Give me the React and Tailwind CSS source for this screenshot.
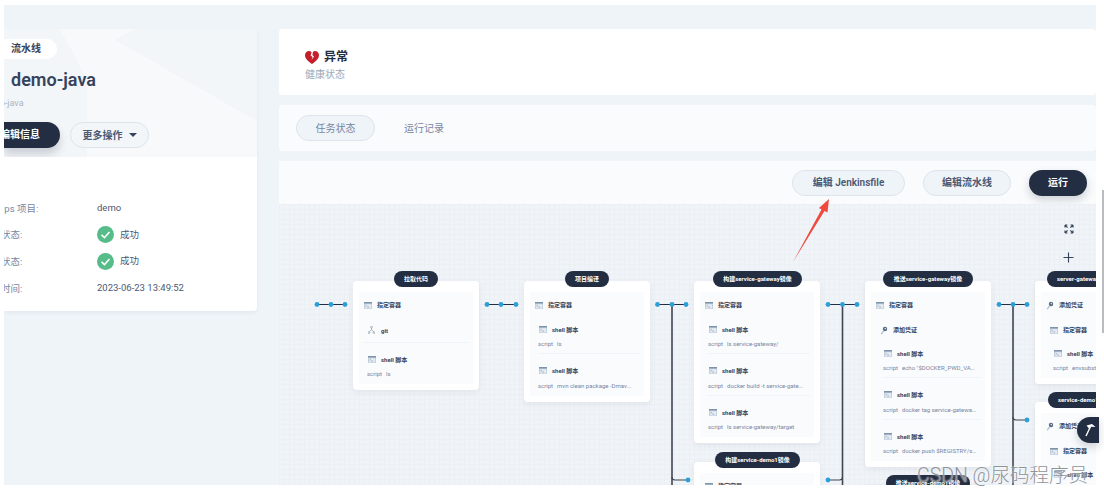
import React from "react";

function TermIcon() {
  return (
    <svg width="8" height="7" viewBox="0 0 8 7" className="shrink-0">
      <rect x="0" y="0" width="8" height="7" fill="#c3d0de" />
      <rect x="0" y="0" width="8" height="1.5" fill="#7f93ab" />
      <rect x="1" y="2.3" width="6" height="4" fill="#e6edf4" />
      <path d="M1.6 3l1 .8-1 .8M3.2 5h2" stroke="#5f738c" strokeWidth=".5" fill="none" />
    </svg>
  );
}

function KeyIcon() {
  return (
    <svg width="8" height="9" viewBox="0 0 8 9" className="shrink-0">
      <circle cx="5" cy="3" r="2.2" fill="#55677f" />
      <circle cx="5.3" cy="2.6" r=".8" fill="#dbe4ee" />
      <path d="M3.8 4.6L1.2 8.2" stroke="#a9bed2" strokeWidth="1.2" />
    </svg>
  );
}

function GitIcon() {
  return (
    <svg width="7" height="8" viewBox="0 0 7 8" className="shrink-0">
      <path d="M3.5 1.5V3.6L1 6.2M3.5 3.6L6 6.2" stroke="#7a8aa0" strokeWidth=".6" fill="none" />
      <circle cx="3.5" cy="1.2" r=".9" fill="#fff" stroke="#66778f" strokeWidth=".5" />
      <circle cx="1" cy="6.6" r=".9" fill="#fff" stroke="#66778f" strokeWidth=".5" />
      <circle cx="6" cy="6.6" r=".9" fill="#fff" stroke="#66778f" strokeWidth=".5" />
    </svg>
  );
}

function Row({ icon, title, pad, gap, h }) {
  return (
    <div className={`flex items-center ${pad} ${gap} ${h}`}>
      {icon}
      <span className="text-[6px] leading-3 font-bold text-[#36435c] whitespace-nowrap">{title}</span>
    </div>
  );
}

function Shell({ script, last }) {
  return (
    <div className={`h-9 pt-[5px] ${last ? "" : "border-b border-[#eff4f9] mb-[5.6px]"}`}>
      <div className="flex items-center gap-[5px] h-3 pl-px">
        <TermIcon />
        <span className="text-[6px] font-bold text-[#36435c] whitespace-nowrap">shell 脚本</span>
      </div>
      <div className="flex h-3 mt-[3px] text-[6px] leading-3 text-[#79869f] whitespace-nowrap">
        <span className="w-[19px] shrink-0">script</span>
        <span className="truncate w-[76px]">{script}</span>
      </div>
    </div>
  );
}

function Node({ pos, title, pill, children }) {
  return (
    <div className={`absolute ${pos} w-[126px] bg-white rounded-[4px] shadow-[0_2px_6px_rgba(36,46,66,0.07)] p-[6px] pt-[11px]`}>
      <div className={`absolute -top-[10px] h-4 rounded-full bg-[#242e42] text-white text-[6px] font-bold leading-4 whitespace-nowrap ${pill}`}>
        {title}
      </div>
      <div className="bg-[#f9fbfd]">{children}</div>
    </div>
  );
}

const Container = () => <Row icon={<TermIcon />} title="指定容器" pad="pl-[5px]" gap="gap-[5px]" h="h-[26px]" />;
const Cred = ({ h = "h-6", pad = "pl-[9px]" }) => <Row icon={<KeyIcon />} title="添加凭证" pad={pad} gap="gap-[5px]" h={h} />;

function Connectors() {
  const dots = [
    [38, 100.5], [52, 100.5], [66, 100.5],
    [208, 100.5], [222, 100.5], [237, 100.5],
    [378.5, 100.5], [393, 100.5], [407, 100.5],
    [549, 100.5], [563.5, 100.5], [578, 100.5],
    [720, 100.5], [734, 100.5], [748, 100.5],
    [409, 276], [549, 276], [748, 216],
  ];
  return (
    <svg className="absolute left-0 top-0 w-[817px] h-[281px]" viewBox="0 0 817 281">
      <path d="M38 100.5H66M208 100.5H237M378.5 100.5H407M549 100.5H578M720 100.5H748" stroke="#242e42" strokeWidth="1" fill="none" />
      <path d="M393 100.5V281M563.5 100.5V281M734 100.5V281" stroke="#3f4753" strokeWidth="1.6" fill="none" />
      <path d="M393 273q0 3 3 3H409M563.5 273q0 3 -3 3H549M734 213q0 3 3 3H748" stroke="#3f4753" strokeWidth="1.1" fill="none" />
      {dots.map(([x, y], i) => (
        <circle key={i} cx={x} cy={y} r="2.4" fill="#2d9fd8" />
      ))}
    </svg>
  );
}

export default function App() {
  return (
    <div className="w-[1104px] h-[494px] bg-white overflow-hidden relative font-['Roboto','Noto_Sans_CJK_SC',sans-serif]">
      <div className="ml-1 mt-[5px] w-[1092px] h-[480px] bg-[#eff4f9] overflow-hidden flex gap-[22px] pt-6">
        {/* left column */}
        <div className="w-[253px] h-[282px] shrink-0 bg-white rounded-r-[4px] shadow-[0_2px_4px_rgba(36,46,66,0.06)] overflow-hidden">
          <div className="relative h-[128px] bg-[#f3f6f9] overflow-hidden">
            <svg className="absolute left-0 top-0 w-[253px] h-[128px]" viewBox="0 0 253 128">
              <path d="M56 0H131L111 11V128H83V50Z" fill="#f7f9fb" />
              <path d="M111 11L253 92V128H147V72L222 114L147 128H111Z" fill="#f7f9fb" />
            </svg>
            <div className="relative pt-[10px]">
              <div className="w-[53px] h-5 bg-white rounded-r-full pl-[7px] text-[10px] leading-5 font-semibold text-[#36435c]">流水线</div>
              <div className="mt-[10px] pl-[7px] text-[18px] leading-[22px] font-semibold text-[#36435c]">demo-java</div>
              <div className="-ml-[22px] mt-[6px] text-[9px] leading-3 text-[#abb4c3]">demo-java</div>
              <div className="flex items-center mt-[13px] gap-[10px]">
                <div className="w-[56px] h-[26px] shrink-0 bg-[#242e42] rounded-r-full overflow-hidden flex justify-end pr-5 text-[10px] leading-[26px] font-semibold text-white whitespace-nowrap shadow-[0_6px_10px_rgba(36,46,66,0.2)]">编辑信息</div>
                <div className="w-[79px] h-[26px] rounded-full bg-[#f3f6f9] border border-[#dde4ec] flex items-center justify-center gap-[6px] text-[10px] font-semibold text-[#4a5974]">
                  更多操作
                  <span className="w-0 h-0 border-x-[4px] border-x-transparent border-t-[4px] border-t-[#36435c]" />
                </div>
              </div>
            </div>
          </div>
          <div className="-ml-[22px] pt-[38px] text-[9.5px] text-[#79869f]">
            {[
              ["DevOps 项目:", "demo"],
              ["任务状态:", "ok"],
              ["同步状态:", "ok"],
              ["更新时间:", "2023-06-23 13:49:52"],
            ].map(([k, v]) => (
              <div key={k} className="flex items-center h-[26.6px]">
                <span className="w-[115px] shrink-0 leading-3 pt-px">{k}</span>
                {v === "ok" ? (
                  <span className="flex items-center gap-[6px] text-[#4a5974]">
                    <svg width="17" height="17" viewBox="0 0 17 17">
                      <circle cx="8.5" cy="8.5" r="8.5" fill="#55bc8a" />
                      <path d="M4.5 8.8l3 2.8 5-5.6" stroke="#fff" strokeWidth="1.6" fill="none" />
                    </svg>
                    成功
                  </span>
                ) : (
                  <span className="text-[#4a5974]">{v}</span>
                )}
              </div>
            ))}
          </div>
        </div>

        {/* right column */}
        <div className="w-[817px] shrink-0 flex flex-col gap-[10px]">
          <div className="h-[66px] bg-white rounded-[4px] pl-[26px] pt-[18px]">
            <div className="flex items-center gap-[5px] h-5">
              <svg width="14" height="13" viewBox="0 0 14 13">
                <path d="M7 13C4 10.6 0 8 0 4.2C0 1.8 1.8 0 4 0C5 0 5.9.4 6.6 1.2L5.6 4.4L7.6 6L6.4 9L9 5.6L7.4 4L8 .8C8.6.3 9.3 0 10 0C12.2 0 14 1.8 14 4.2C14 8 10 10.6 7 13Z" fill="#c4202c" />
              </svg>
              <span className="text-xs font-bold text-[#242e42]">异常</span>
            </div>
            <div className="text-[10px] leading-[14px] mt-[1px] text-[#a0a9b8]">健康状态</div>
          </div>
          <div className="h-[46px] bg-[#f9fbfd] rounded-[4px] flex items-center pl-[17px] gap-[29px] text-[10px] text-[#79869f]">
            <div className="w-[79px] h-[26px] rounded-full bg-[#eff4f9] border border-[#dde4ec] flex items-center justify-center">任务状态</div>
            <div>运行记录</div>
          </div>
          <div className="h-[324px] shrink-0 flex flex-col">
            <div className="h-[43px] shrink-0 bg-[#f9fbfd] flex items-center justify-end gap-[18px] pr-[9px] text-[10px] font-semibold">
              <div className="w-[113px] h-[26px] rounded-full bg-[#eff4f9] border border-[#dde4ec] flex items-center justify-center text-[#4a5974]">编辑 Jenkinsfile</div>
              <div className="w-[88px] h-[26px] rounded-full bg-[#eff4f9] border border-[#dde4ec] flex items-center justify-center text-[#4a5974]">编辑流水线</div>
              <div className="w-[58px] h-[26px] rounded-full bg-[#242e42] flex items-center justify-center text-white shadow-[0_4px_8px_rgba(36,46,66,0.2)]">运行</div>
            </div>
            <div className="relative flex-1 overflow-hidden bg-[#f0f4f8] bg-[linear-gradient(#ebf0f5_1px,transparent_1px),linear-gradient(90deg,#ebf0f5_1px,transparent_1px)] bg-[size:5px_5px]">
              <Connectors />
              <Node pos="left-[74px] top-[77px]" title="拉取代码" pill="left-[41px] w-[44px] text-center">
                <Container />
                <div className="border-b border-[#eff4f9] mx-1 h-[25px] flex items-center gap-[6px] pl-[5px]">
                  <GitIcon />
                  <span className="text-[6px] font-bold text-[#36435c]">git</span>
                </div>
                <div className="h-[5px]" />
                <div className="pl-2"><Shell script="ls" last /></div>
              </Node>
              <Node pos="left-[245px] top-[77px]" title="项目编译" pill="left-[41px] w-[44px] text-center">
                <Container />
                <div className="pl-2 pr-1">
                  <Shell script="ls" />
                  <Shell script="mvn clean package -Dmaven.test.skip" last />
                </div>
              </Node>
              <Node pos="left-[415px] top-[77px]" title="构建service-gateway镜像" pill="left-[19px] w-[89px] text-center">
                <Container />
                <div className="pl-2 pr-1">
                  <Shell script="ls service-gateway/" />
                  <Shell script="docker build -t service-gateway:latest" />
                  <Shell script="ls service-gateway/target" last />
                </div>
              </Node>
              <Node pos="left-[415px] top-[258px]" title="构建service-demo1镜像" pill="left-[21px] w-[85px] text-center">
                <Container />
              </Node>
              <Node pos="left-[586px] top-[77px]" title="推送service-gateway镜像" pill="left-[18px] w-[90px] text-center">
                <Container />
                <Cred />
                <div className="pl-3 pr-1">
                  <Shell script={'echo "$DOCKER_PWD_VAR" | docker'} />
                  <Shell script="docker tag service-gateway:latest" />
                  <Shell script="docker push $REGISTRY/service" last />
                </div>
              </Node>
              <Node pos="left-[586px] top-[281px]" title="推送service-demo1镜像" pill="left-[21px] w-[84px] text-center">
                <Container />
              </Node>
              <Node pos="left-[756px] top-[77px]" title="server-gateway" pill="left-[12px] w-[102px] pl-[10px]">
                <Cred h="h-[26px]" pad="pl-[5px]" />
                <Row icon={<TermIcon />} title="指定容器" pad="pl-[9px]" gap="gap-[5px]" h="h-6" />
                <div className="pl-3"><Shell script="envsubst < deploy.yaml" last /></div>
              </Node>
              <Node pos="left-[756px] top-[198px]" title="service-demo1" pill="left-[13px] w-[100px] pl-[10px]">
                <Cred h="h-[26px]" pad="pl-[5px]" />
                <Row icon={<TermIcon />} title="指定容器" pad="pl-[9px]" gap="gap-[5px]" h="h-6" />
                <div className="pl-3"><Shell script="envsubst < deploy.yaml" last /></div>
              </Node>
              <div className="absolute left-[784px] top-[20px] flex flex-col items-center gap-[18px]">
                <svg width="10" height="10" viewBox="0 0 10 10" fill="none" stroke="#36435c" strokeWidth="1.1">
                  <path d="M1 1l2.6 2.6M1 1h2.4M1 1v2.4M9 1L6.4 3.6M9 1H6.6M9 1v2.4M1 9l2.6-2.6M1 9h2.4M1 9V6.6M9 9L6.4 6.4M9 9H6.6M9 9V6.6" />
                </svg>
                <svg width="11" height="11" viewBox="0 0 11 11" fill="none" stroke="#36435c" strokeWidth="1.1">
                  <path d="M5.5 .5v10M.5 5.5h10" />
                </svg>
              </div>
            </div>
          </div>
        </div>
      </div>

      {/* scrollbar sliver */}
      <div className="absolute left-[1102px] top-[190px] w-[2px] h-[143px] bg-[#b9bcc0]" />

      {/* floating action button */}
      <div className="absolute left-[1077px] top-[417px] w-[22px] h-[26px] rounded-l-[13px] bg-[#242e42] shadow-[0_4px_8px_rgba(36,46,66,0.2)] pl-[6px] pt-[6px]">
        <svg width="14" height="14" viewBox="0 0 14 14" fill="none">
          <path d="M3 13L7.5 3.5" stroke="#fff" strokeWidth="1.4" />
          <path d="M3.5 2.5L9 1l3.5 3L8 3.8 6 5.5Z" fill="#fff" />
        </svg>
      </div>

      {/* annotation arrow */}
      <svg className="absolute left-[785px] top-[195px] w-[50px] h-[72px]" viewBox="0 0 50 72">
        <path d="M8 67L36.5 14.5L34 13L44 4L42.5 17.5L39.5 16Z" fill="#f04a3e" />
      </svg>

      {/* watermark */}
      <div className="absolute left-[917px] top-[464px] text-[19.5px] leading-6 font-light text-[#8f9499] [text-shadow:0_0_2px_#fff] whitespace-nowrap">CSDN @尿码程序员</div>
    </div>
  );
}
